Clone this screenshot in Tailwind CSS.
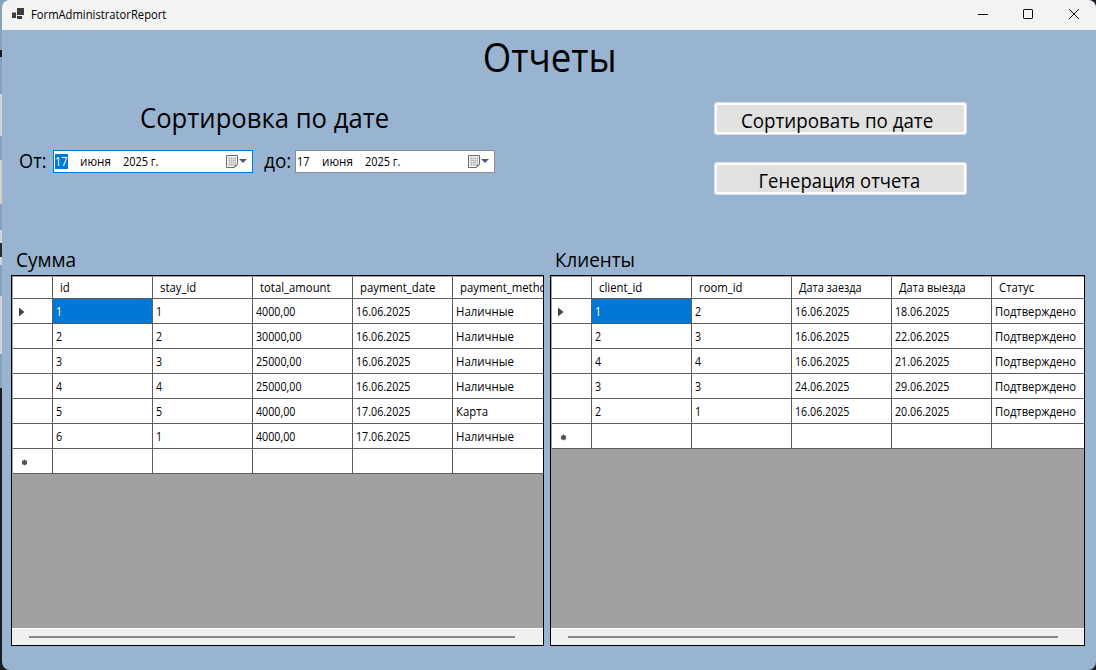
<!DOCTYPE html>
<html lang="ru">
<head>
<meta charset="utf-8">
<title>FormAdministratorReport</title>
<script src="https://cdn.jsdelivr.net/npm/@tailwindcss/browser@4"></script>
</head>
<body class="relative h-[670px] w-[1096px] overflow-hidden bg-[#1c1c20] font-['Open_Sans','Noto_Sans',sans-serif] text-black">
<!-- edge of the window lying behind -->
<div class="absolute top-0 left-0 flex h-[388px] w-3 flex-col bg-[#86a0bd]">
  <div class="h-[50px]"></div>
  <div class="h-[7px] w-[2px] bg-[#14181f]"></div>
  <div class="mt-[37px] h-[42px] w-[2px] bg-[#d4d6d8]"></div>
  <div class="mt-[24px] h-[44px] w-[2px] bg-[#d4cfc8]"></div>
  <div class="mt-[26px] h-[13px] w-[2px] bg-[#d4d6d8]"></div>
  <div class="h-[14px] w-[2px] bg-[#2a2a2a]"></div>
  <div class="h-[8px] w-[2px] bg-[#d4d6d8]"></div>
  <div class="mt-[31px] h-[58px] w-[2px] bg-[#d4d6d8]"></div>
</div>

<div class="relative ml-[2px] flex h-[670px] w-[1094px] flex-col overflow-hidden rounded-lg bg-[#99b4d1]">
  <header class="flex h-[30px] shrink-0 items-center bg-[#f3f3f3]">
    <svg class="ml-[9px] h-[14px] w-[14px]" viewBox="0 0 14 14" fill="#3d3d3d"><path d="M6 0h7v7H6z"/><path d="M1 4.500h4v5.500H1z"/><path d="M6 8h5v3H6z"/></svg>
    <span class="ml-[6px] w-[145px] origin-left scale-x-[.935] text-xs whitespace-nowrap">FormAdministratorReport</span>
    <svg class="ml-auto h-[30px] w-[120px]" viewBox="0 0 120 30" fill="none" stroke="#111" stroke-width="1">
      <path d="M2 14.500h10"/><rect x="47.500" y="9.500" width="9" height="9" rx=".6"/><path d="M93 9l10 10M103 9l-10 10"/>
    </svg>
  </header>

  <h1 class="h-[50px] text-center text-[40px] leading-[53px]"><span class="inline-block translate-x-[0.5px] scale-x-[.915]">Отчеты</span></h1>

  <section class="flex h-[165px] shrink-0">
    <div class="w-[712px] pt-[18px]">
      <h2 class="ml-[138px] h-10 origin-left scale-x-[.95] text-[27px] leading-10 whitespace-nowrap">Сортировка по дате</h2>
      <div class="mt-[8px] flex items-start">
        <span class="ml-[17px] w-[34px] origin-left scale-x-[.91] text-xl leading-[30px]">От:</span>
        <div class="mt-1 flex h-[23px] w-[200px] items-center border border-[#0078d7] bg-white text-xs leading-[15px] whitespace-nowrap">
          <span class="ml-px flex h-[15px] w-[13px] items-center bg-[#0078d7] text-white"><span class="inline-block origin-left scale-x-[.91]">17</span></span>
          <span class="ml-[12px] w-[43px] origin-left scale-x-[.97]">июня</span>
          <span class="origin-left scale-x-[.91]">2025 г.</span>
          <svg class="mr-[4px] ml-auto h-[14px] w-[22px]" viewBox="0 0 22 14"><path d="M.5.5h11v9l-3 3h-8z" fill="#f2f2f2" stroke="#6b6b6b"/><path d="M2 3.500h8M2 5.500h8M2 7.500h8M2 9.500h6M3.500 2v9M5.500 2v9M7.500 2v9M9.500 2v7" stroke="#b5b5b5" stroke-width=".7"/><path d="M8.500 12.500v-3h3z" fill="#777"/><path d="M13 4h8l-4 4z" fill="#44597d"/></svg>
        </div>
        <span class="ml-[11px] w-[31px] origin-left scale-x-[.95] text-xl leading-[30px]">до:</span>
        <div class="mt-1 flex h-[23px] w-[200px] items-center border border-[#8a8f96] bg-white text-xs leading-[15px] whitespace-nowrap">
          <span class="ml-px flex h-[15px] w-[13px] items-center"><span class="inline-block origin-left scale-x-[.91]">17</span></span>
          <span class="ml-[12px] w-[43px] origin-left scale-x-[.97]">июня</span>
          <span class="origin-left scale-x-[.91]">2025 г.</span>
          <svg class="mr-[4px] ml-auto h-[14px] w-[22px]" viewBox="0 0 22 14"><path d="M.5.5h11v9l-3 3h-8z" fill="#f2f2f2" stroke="#6b6b6b"/><path d="M2 3.500h8M2 5.500h8M2 7.500h8M2 9.500h6M3.500 2v9M5.500 2v9M7.500 2v9M9.500 2v7" stroke="#b5b5b5" stroke-width=".7"/><path d="M8.500 12.500v-3h3z" fill="#777"/><path d="M13 4h8l-4 4z" fill="#44597d"/></svg>
        </div>
      </div>
    </div>
    <div class="flex flex-col gap-[27px] pt-[22px]">
      <button class="flex h-[33px] w-[253px] justify-center rounded-[4px] border-[3px] border-[#fdfdfd] bg-[#e1e1e1] pt-[2px] text-xl leading-7 whitespace-nowrap outline -outline-offset-1 outline-[#dbe0e6]"><span class="translate-x-[-3.5px] scale-x-[.937]">Сортировать по дате</span></button>
      <button class="flex h-[33px] w-[253px] justify-center rounded-[4px] border-[3px] border-[#fdfdfd] bg-[#e1e1e1] pt-[2px] text-xl leading-7 whitespace-nowrap outline -outline-offset-1 outline-[#dbe0e6]"><span class="translate-x-[-1.5px] scale-x-[.92]">Генерация отчета</span></button>
    </div>
  </section>

  <main class="flex gap-[6px] pl-[9px]">
    <section>
      <h3 class="h-[30px] pl-[5px] text-xl leading-[30px]"><span class="inline-block origin-left scale-x-[.955]">Сумма</span></h3>
      <div class="flex h-[371px] w-[533px] flex-col overflow-hidden border border-black bg-[#a0a0a0]">
        <div class="grid shrink-0 auto-rows-[25px] grid-cols-[40px_100px_100px_100px_100px_90px] grid-rows-[22px] border-t border-l border-[#a0a0a0] text-xs leading-[26px] whitespace-nowrap *:overflow-hidden *:border-r *:border-b *:border-[#5e5e5e] *:bg-white *:pl-[3px] *:nth-[6n]:border-r-0 [&_b]:inline-block [&_b]:origin-left [&_b]:scale-x-[.89] [&_b]:font-normal [&_i]:inline-block [&_i]:origin-left [&_i]:scale-x-[.95] [&_i]:not-italic [&_u]:inline-block [&_u]:h-[21px] [&_u]:origin-left [&_u]:translate-x-1 [&_u]:scale-x-[.945] [&_u]:align-top [&_u]:leading-[22px] [&_u]:no-underline">
          <div></div><div><u>id</u></div><div><u>stay_id</u></div><div><u>total_amount</u></div><div><u>payment_date</u></div><div><u>payment_method</u></div>
          <div><svg class="mt-[8px] ml-[3px] h-[10px] w-[6px]" viewBox="0 0 6 10"><path d="M0 .5L5.500 5 0 9.500z" fill="#444"/></svg></div><div class="bg-[#0078d7]! text-white"><b>1</b></div><div><b>1</b></div><div><b>4000,00</b></div><div><b>16.06.2025</b></div><div><i>Наличные</i></div>
          <div></div><div><b>2</b></div><div><b>2</b></div><div><b>30000,00</b></div><div><b>16.06.2025</b></div><div><i>Наличные</i></div>
          <div></div><div><b>3</b></div><div><b>3</b></div><div><b>25000,00</b></div><div><b>16.06.2025</b></div><div><i>Наличные</i></div>
          <div></div><div><b>4</b></div><div><b>4</b></div><div><b>25000,00</b></div><div><b>16.06.2025</b></div><div><i>Наличные</i></div>
          <div></div><div><b>5</b></div><div><b>5</b></div><div><b>4000,00</b></div><div><b>17.06.2025</b></div><div><i>Карта</i></div>
          <div></div><div><b>6</b></div><div><b>1</b></div><div><b>4000,00</b></div><div><b>17.06.2025</b></div><div><i>Наличные</i></div>
          <div><svg class="mt-[10px] ml-[5px] h-[7px] w-[7px]" viewBox="0 0 7 7"><circle cx="3.500" cy="3.500" r="2.500" fill="#555"/><path d="M3.500.5v6M.8 2l5.400 3M.8 5l5.400-3" stroke="#555" stroke-width=".8"/></svg></div><div></div><div></div><div></div><div></div><div></div>
        </div>
        <div class="mt-auto h-[17px] border-t border-white bg-[#f0f0f0] pt-[7px]"><div class="ml-[17px] h-[2px] w-[486px] bg-[#858585]"></div></div>
      </div>
    </section>
    <section>
      <h3 class="h-[30px] pl-[5px] text-xl leading-[30px]"><span class="inline-block origin-left scale-x-[.94]">Клиенты</span></h3>
      <div class="flex h-[371px] w-[535px] flex-col overflow-hidden border border-black bg-[#a0a0a0]">
        <div class="grid shrink-0 auto-rows-[25px] grid-cols-[40px_100px_100px_100px_100px_92px] grid-rows-[22px] border-t border-l border-[#a0a0a0] text-xs leading-[26px] whitespace-nowrap *:border-r *:border-b *:border-[#5e5e5e] *:bg-white *:pl-[3px] *:nth-[6n]:border-r-0 [&_b]:inline-block [&_b]:origin-left [&_b]:scale-x-[.89] [&_b]:font-normal [&_i]:inline-block [&_i]:origin-left [&_i]:scale-x-[.935] [&_i]:not-italic [&_u]:inline-block [&_u]:h-[21px] [&_u]:origin-left [&_u]:translate-x-1 [&_u]:scale-x-[.945] [&_u]:align-top [&_u]:leading-[22px] [&_u]:no-underline">
          <div></div><div><u>client_id</u></div><div><u>room_id</u></div><div><u class="scale-x-[.91]!">Дата заезда</u></div><div><u class="scale-x-[.92]!">Дата выезда</u></div><div><u>Статус</u></div>
          <div><svg class="mt-[8px] ml-[3px] h-[10px] w-[6px]" viewBox="0 0 6 10"><path d="M0 .5L5.500 5 0 9.500z" fill="#444"/></svg></div><div class="bg-[#0078d7]! text-white"><b>1</b></div><div><b>2</b></div><div><b>16.06.2025</b></div><div><b>18.06.2025</b></div><div><i>Подтверждено</i></div>
          <div></div><div><b>2</b></div><div><b>3</b></div><div><b>16.06.2025</b></div><div><b>22.06.2025</b></div><div><i>Подтверждено</i></div>
          <div></div><div><b>4</b></div><div><b>4</b></div><div><b>16.06.2025</b></div><div><b>21.06.2025</b></div><div><i>Подтверждено</i></div>
          <div></div><div><b>3</b></div><div><b>3</b></div><div><b>24.06.2025</b></div><div><b>29.06.2025</b></div><div><i>Подтверждено</i></div>
          <div></div><div><b>2</b></div><div><b>1</b></div><div><b>16.06.2025</b></div><div><b>20.06.2025</b></div><div><i>Подтверждено</i></div>
          <div><svg class="mt-[10px] ml-[5px] h-[7px] w-[7px]" viewBox="0 0 7 7"><circle cx="3.500" cy="3.500" r="2.500" fill="#555"/><path d="M3.500.5v6M.8 2l5.400 3M.8 5l5.400-3" stroke="#555" stroke-width=".8"/></svg></div><div></div><div></div><div></div><div></div><div></div>
        </div>
        <div class="mt-auto h-[17px] border-t border-white bg-[#f0f0f0] pt-[7px]"><div class="ml-[17px] h-[2px] w-[490px] bg-[#858585]"></div></div>
      </div>
    </section>
  </main>
</div>
</body>
</html>
